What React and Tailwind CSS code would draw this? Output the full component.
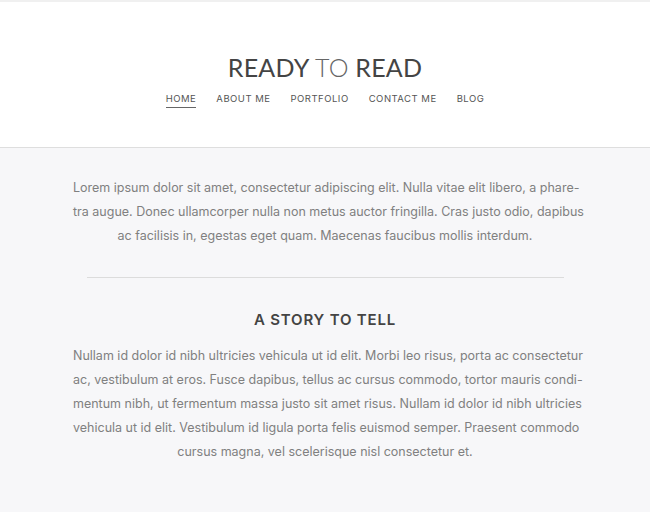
import React from 'react';

const navItems = ['HOME', 'ABOUT ME', 'PORTFOLIO', 'CONTACT ME', 'BLOG'];

const intro = [
  'Lorem ipsum dolor sit amet, consectetur adipiscing elit. Nulla vitae elit libero, a phare-',
  'tra augue. Donec ullamcorper nulla non metus auctor fringilla. Cras justo odio, dapibus',
];
const introLast = 'ac facilisis in, egestas eget quam. Maecenas faucibus mollis interdum.';

const story = [
  'Nullam id dolor id nibh ultricies vehicula ut id elit. Morbi leo risus, porta ac consectetur',
  'ac, vestibulum at eros. Fusce dapibus, tellus ac cursus commodo, tortor mauris condi-',
  'mentum nibh, ut fermentum massa justo sit amet risus. Nullam id dolor id nibh ultricies',
  'vehicula ut id elit. Vestibulum id ligula porta felis euismod semper. Praesent commodo',
];
const storyLast = 'cursus magna, vel scelerisque nisl consectetur et.';

const Paragraph = ({ lines, last }) => (
  <div className="w-[504px] mx-auto text-[12.5px] leading-[24px] text-[#808080] font-['Inter','Liberation_Sans',sans-serif]">
    {lines.map((line) => (
      <div key={line} className="text-justify [text-align-last:justify] whitespace-nowrap">
        {line}
      </div>
    ))}
    <div className="text-center">{last}</div>
  </div>
);

export default function App() {
  return (
    <div className="min-h-[512px] bg-[#f7f7f9] font-['Lato','Liberation_Sans',sans-serif]">
      {/* Header */}
      <header className="h-[148px] bg-white border-t-2 border-[#f0f0f0] border-b border-b-[#dedede] flex flex-col items-center pt-[50px]">
        <h1 className="text-[25px] leading-[30px] tracking-[0.2px] text-[#444]">
          READY <span className="font-light text-[#666]">TO</span> READ
        </h1>
        <nav className="flex gap-[20px] mt-[10px] text-[9.5px] tracking-[0.5px] text-[#555] font-['Inter','Liberation_Sans',sans-serif]">
          {navItems.map((item, i) => (
            <a
              key={item}
              className={i === 0 ? 'border-b border-[#666] pb-[1px]' : ''}
            >
              {item}
            </a>
          ))}
        </nav>
      </header>

      {/* Content */}
      <main className="pt-[28px] pb-10">
        <Paragraph lines={intro} last={introLast} />
        <hr className="w-[477px] mx-auto mt-[29px] border-t border-[#dcdcdc]" />
        <h2 className="mt-[32px] text-center text-[15px] leading-[20px] font-semibold tracking-[0.8px] text-[#444] font-['Inter','Liberation_Sans',sans-serif]">
          A STORY TO TELL
        </h2>
        <div className="mt-[14px]">
          <Paragraph lines={story} last={storyLast} />
        </div>
      </main>
    </div>
  );
}
